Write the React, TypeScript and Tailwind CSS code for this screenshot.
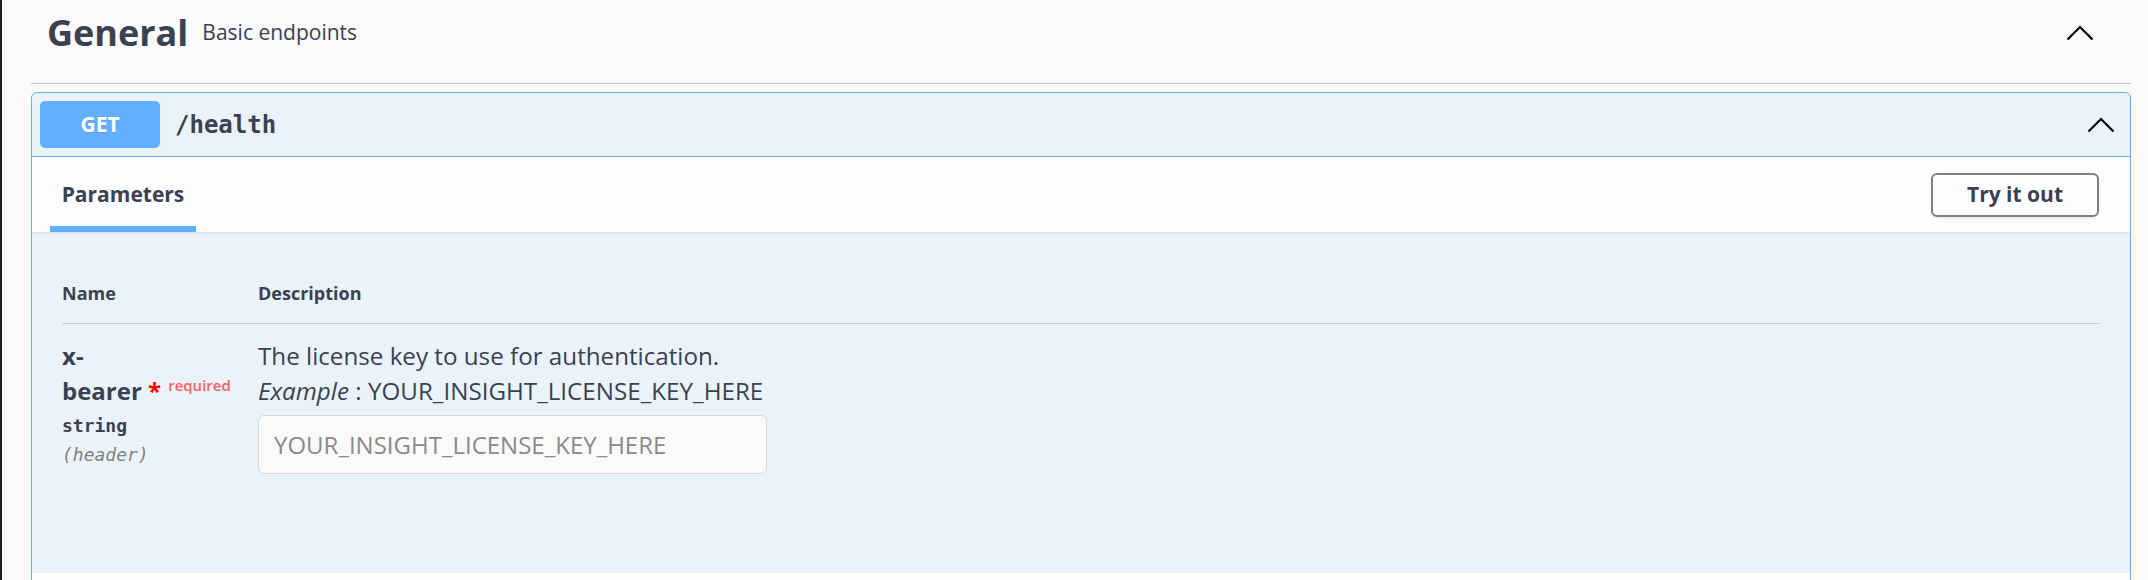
import React from 'react';

const sans = "font-['Open_Sans','Noto_Sans',sans-serif]";
const mono = "font-['DejaVu_Sans_Mono','Liberation_Mono',monospace]";

const Chevron: React.FC = () => (
  <svg width="28" height="16" viewBox="0 0 28 16" fill="none">
    <polyline points="1.5,14.5 14,2 26.5,14.5" stroke="#000" strokeWidth="2.2" />
  </svg>
);

const TagHeader: React.FC = () => {
  return <div className="flex items-center border-b border-[#c1c3c7] pl-[16px] pr-[37px] pt-[8px] pb-[26px]">
      <h3 className={`${sans} text-[36px] font-bold leading-[49px] text-[#3b4151]`}>General</h3>
      <small className={`${sans} ml-[14px] flex-1 text-[21px] text-[#3b4151]`}>Basic endpoints</small>
      <Chevron />
    </div>;
};

const ParamRow: React.FC = () => {
  return <div className="flex pt-[14px]">
      <div className="w-[196px] shrink-0">
        <div className={`${sans} text-[24px] font-bold leading-[35px] text-[#3b4151]`}>
          <div>x-</div>
          <div>
            bearer <span className="text-[#ff0000]">*</span>
            <span className="relative -top-[9px] pl-[7px] text-[15px] font-semibold text-[#f76164]">required</span>
          </div>
        </div>
        <div className={`${mono} pt-[2px] pb-[5px] text-[18px] font-bold leading-[24px] text-[#3b4151]`}>string</div>
        <div className={`${mono} text-[18px] italic leading-[24px] text-[#808080]`}>(header)</div>
      </div>
      <div className={`${sans} flex-1 text-[24.2px] leading-[35px] text-[#3b4151]`}>
        <p>The license key to use for authentication.</p>
        <p>
          <i>Example</i> : YOUR_INSIGHT_LICENSE_KEY_HERE
        </p>
        <input
          className={`${sans} mt-[7px] h-[59px] w-[509px] rounded-[6px] border border-[#d9d9d9] bg-[#fafafa] px-[15px] text-[24px] text-[#3b4151] outline-none placeholder:text-[#8a8a8a]`}
          placeholder="YOUR_INSIGHT_LICENSE_KEY_HERE"
        />
      </div>
    </div>;
};

const Operation: React.FC = () => {
  return <div className="mt-[8px] overflow-hidden rounded-[6px] border border-[#61affe] bg-[#ebf3fa]">
      <div className="flex h-[64px] items-center border-b border-[#61affe] pl-[8px] pr-[15px]">
        <span className={`${sans} flex h-[47px] w-[120px] items-center justify-center rounded-[5px] bg-[#61affe] text-[21px] font-bold text-white [text-shadow:0_1px_0_rgba(0,0,0,0.1)]`}>
          GET
        </span>
        <span className={`${mono} ml-[15px] flex-1 text-[24px] font-bold text-[#3b4151]`}>/health</span>
        <Chevron />
      </div>

      <div className="relative z-10 flex h-[75px] items-center bg-[#fbfdfe] pr-[31px] shadow-[0_1px_2px_rgba(0,0,0,0.1)]">
        <div className="relative ml-[18px] flex h-full w-[146px] items-center justify-center">
          <h4 className={`${sans} text-[21px] font-bold text-[#3b4151]`}>Parameters</h4>
          <span className="absolute bottom-0 left-0 h-[6px] w-full bg-[#61affe]" />
        </div>
        <div className="flex-1" />
        <button className={`${sans} h-[44px] w-[168px] rounded-[6px] border-2 border-[#808080] bg-transparent text-[21px] font-bold text-[#3b4151] shadow-[0_1px_2px_rgba(0,0,0,0.1)]`}>
          Try it out
        </button>
      </div>

      <div className="h-[341px] px-[30px] pt-[49px]">
        <div className={`${sans} flex border-b border-[#c8cfd8] pb-[18px] text-[18px] font-bold leading-[24px] text-[#3b4151]`}>
          <div className="w-[196px]">Name</div>
          <div>Description</div>
        </div>
        <ParamRow />
      </div>

      <div className="h-[60px] bg-[#fbfdfe] shadow-[0_1px_2px_rgba(0,0,0,0.1)]" />
    </div>;
};

export default function App() {
  return <div className="flex min-h-screen bg-[#fafafa]">
      <div className="w-[2px] shrink-0 bg-[#202028]" />
      <div className="flex-1 pl-[29px] pr-[17px]">
        <TagHeader />
        <Operation />
      </div>
    </div>;
}
